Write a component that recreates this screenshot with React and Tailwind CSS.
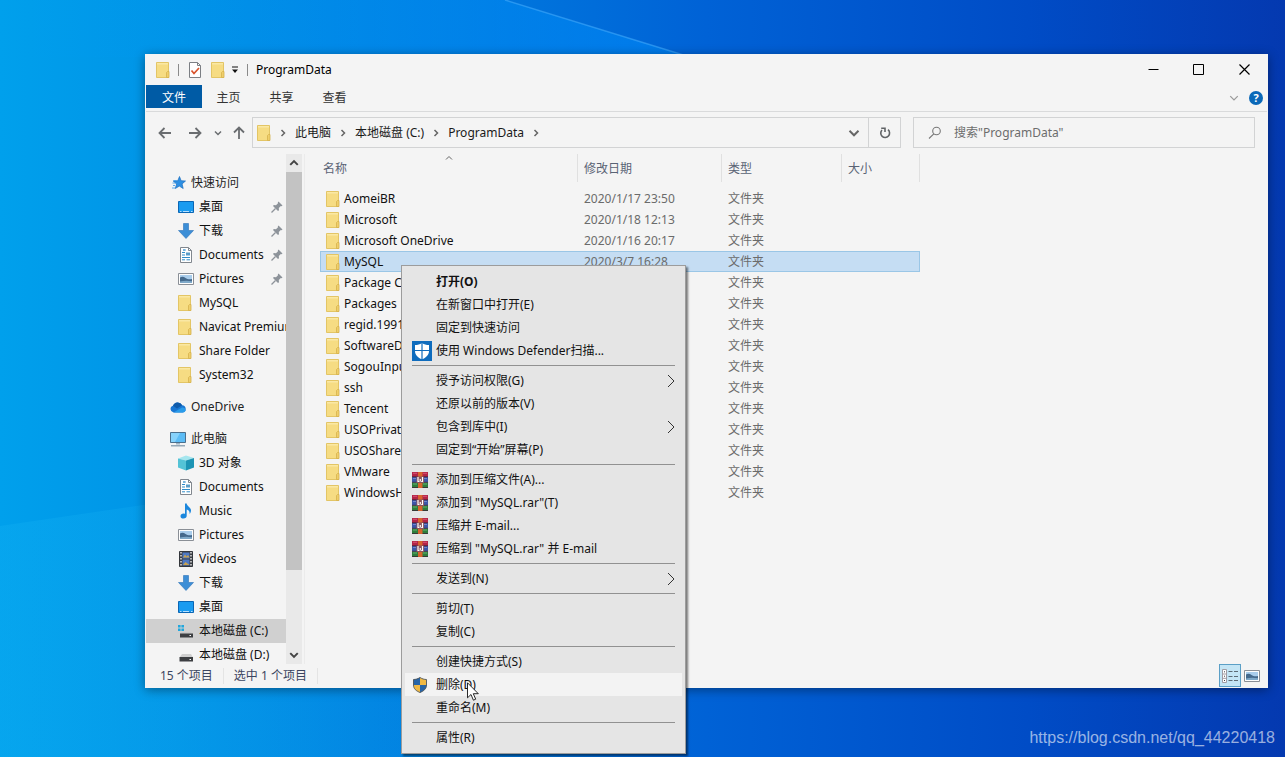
import React from 'react';

const quickAccess = [
  { name: '桌面', icon: 'desktop', pinned: true },
  { name: '下载', icon: 'download', pinned: true },
  { name: 'Documents', icon: 'document', pinned: true },
  { name: 'Pictures', icon: 'picture', pinned: true },
  { name: 'MySQL', icon: 'folder' },
  { name: 'Navicat Premium', icon: 'folder' },
  { name: 'Share Folder', icon: 'folder' },
  { name: 'System32', icon: 'folder' },
];

const thisPc = [
  { name: '3D 对象', icon: 'cube' },
  { name: 'Documents', icon: 'document' },
  { name: 'Music', icon: 'music' },
  { name: 'Pictures', icon: 'picture' },
  { name: 'Videos', icon: 'video' },
  { name: '下载', icon: 'download' },
  { name: '桌面', icon: 'desktop' },
  { name: '本地磁盘 (C:)', icon: 'systemDrive', active: true },
  { name: '本地磁盘 (D:)', icon: 'drive' },
];

const files = [
  { name: 'AomeiBR', date: '2020/1/17 23:50' },
  { name: 'Microsoft', date: '2020/1/18 12:13' },
  { name: 'Microsoft OneDrive', date: '2020/1/16 20:17' },
  { name: 'MySQL', date: '2020/3/7 16:28', selected: true },
  { name: 'Package Cache' },
  { name: 'Packages' },
  { name: 'regid.1991' },
  { name: 'SoftwareDist' },
  { name: 'SogouInput' },
  { name: 'ssh' },
  { name: 'Tencent' },
  { name: 'USOPrivate' },
  { name: 'USOShared' },
  { name: 'VMware' },
  { name: 'WindowsHolo' },
];

const menuGroups = [
  [
    { label: '打开(O)', bold: true },
    { label: '在新窗口中打开(E)' },
    { label: '固定到快速访问' },
    { label: '使用 Windows Defender扫描...', icon: 'defender' },
  ],
  [
    { label: '授予访问权限(G)', submenu: true },
    { label: '还原以前的版本(V)' },
    { label: '包含到库中(I)', submenu: true },
    { label: '固定到“开始”屏幕(P)' },
  ],
  [
    { label: '添加到压缩文件(A)...', icon: 'winrar' },
    { label: '添加到 "MySQL.rar"(T)', icon: 'winrar' },
    { label: '压缩并 E-mail...', icon: 'winrar' },
    { label: '压缩到 "MySQL.rar" 并 E-mail', icon: 'winrar' },
  ],
  [{ label: '发送到(N)', submenu: true }],
  [{ label: '剪切(T)' }, { label: '复制(C)' }],
  [
    { label: '创建快捷方式(S)' },
    { label: '删除(D)', icon: 'shield', hovered: true },
    { label: '重命名(M)' },
  ],
  [{ label: '属性(R)' }],
];

const FolderIcon = () => (
  <svg className="h-4 w-4 shrink-0" viewBox="0 0 16 16">
    <path d="M.5.5h12v15H.5z" fill="#f6dc83" stroke="#e3c565" />
    <path d="M1 1h11v1.5H1z" fill="#fae8a4" />
    <path d="M10.500 15.500v-5l1-1H13v6z" fill="#efcf6b" stroke="#d6b14c" strokeWidth=".8" />
  </svg>
);

const PictureIcon = () => (
  <svg className="h-4 w-4 shrink-0" viewBox="0 0 16 16">
    <path d="M.5 2.500h15v11H.5z" fill="#fdfdfd" stroke="#8a8f96" />
    <path d="M2 4h12v8H2z" fill="#a9cdec" />
    <path d="M2 6.500c2-1.200 4-.6 5.500.4S11 8.500 14 8v4H2z" fill="#44698c" />
    <path d="M2 10.500c4-1 8-1 12-.2V12H2z" fill="#7fa9c9" />
  </svg>
);

const icons = {
  folder: <FolderIcon />,
  picture: <PictureIcon />,
  star: (
    <svg className="h-4 w-4 shrink-0" viewBox="0 0 16 16">
      <path d="M9.500 1.500l1.600 4.200 4.400.3-3.400 2.900 1.100 4.600-3.900-2.400-4 2.400 1.300-4.500L3.200 6l4.600-.3z" fill="#2d8fe2" stroke="#1b6fc0" strokeWidth=".7" />
      <path d="M3.500 5.500h3M2.500 8h3M3 10.500h2M2 13h3" stroke="#4aa3ea" strokeWidth=".9" />
    </svg>
  ),
  desktop: (
    <svg className="h-4 w-4 shrink-0" viewBox="0 0 16 16">
      <path d="M.5 2.500h15v11H.5z" fill="#1a9bf0" stroke="#0b66b4" />
      <path d="M2 12.500h1.500M5 12.500h6M13 12.500h1.500" stroke="#b6e0ff" />
    </svg>
  ),
  download: (
    <svg className="h-4 w-4 shrink-0" viewBox="0 0 16 16">
      <path d="M5.500.5h5v7h5L8 15.500.5 7.500h5z" fill="#3c8ed6" stroke="#2b72b8" strokeWidth=".6" />
    </svg>
  ),
  document: (
    <svg className="h-4 w-4 shrink-0" viewBox="0 0 16 16">
      <path d="M2.500.5h8l3 3v12h-11z" fill="#fff" stroke="#81878e" />
      <path d="M10.500.5v3h3" fill="none" stroke="#81878e" />
      <path d="M4 5.500h3M4 8h3M4 10.500h8M4 12.800h3M8.500 12.800h3.500" stroke="#2f8cc9" />
      <path d="M8 5.500h4v3H8z" fill="#5a9dc8" />
      <path d="M6 2v2M5 3h3" stroke="#2f8cc9" strokeWidth=".8" />
    </svg>
  ),
  music: (
    <svg className="h-4 w-4 shrink-0" viewBox="0 0 16 16">
      <path d="M7 .5h1.700c.3 3 4.500 3.800 4.300 7.200-.1 1.500-.8 2.600-1.500 3.300.5-2.500-.6-3.800-2.800-4.500v6.300c0 1.700-1.300 2.700-3.200 2.700S2.500 14.600 2.500 13.200s1.300-2.600 3.100-2.600c.5 0 1 .1 1.400.3z" fill="#1b87dd" />
    </svg>
  ),
  video: (
    <svg className="h-4 w-4 shrink-0" viewBox="0 0 16 16">
      <path d="M1.500.5h13v15h-13z" fill="#3b3f45" stroke="#33363b" />
      <path d="M3 1v14M13 1v14" stroke="#e8e8e8" strokeWidth="1.400" strokeDasharray="1.500 1.500" />
      <path d="M4.500 1.500h7v6h-7z" fill="#4d78c4" />
      <path d="M4.500 8.500h7v6h-7z" fill="#4d78c4" />
      <path d="M5 6.500l2-3 1.500 2 1.500-1.500 1.500 2.500zM5 14l2.500-3 4 3z" fill="#c9a24e" />
    </svg>
  ),
  cloud: (
    <svg className="h-4 w-4 shrink-0" viewBox="0 0 16 16">
      <path d="M3.500 13.500A3.500 3.500 0 013 6.700 5 5 0 0112.200 6.200a3.700 3.700 0 01.6 7.300z" fill="#1976d2" />
      <path d="M3 6.700A5 5 0 0112.200 6.200L7 9.500z" fill="#0f5baa" />
      <path d="M3.500 13.500L12 8.500a3.600 3.600 0 013.800 3 3.300 3.300 0 01-3 2z" fill="#2a9cea" />
    </svg>
  ),
  computer: (
    <svg className="h-4 w-4 shrink-0" viewBox="0 0 16 16">
      <path d="M.5 1.500h15v10H.5z" fill="#5cbcf5" stroke="#4b6f8c" />
      <path d="M1 2h9L5 11H1z" fill="#86d2fb" />
      <path d="M6 12h4v1.500H6z" fill="#9fb4c4" />
      <path d="M1 14.800h14" stroke="#7d95a8" strokeWidth="1.200" />
    </svg>
  ),
  cube: (
    <svg className="h-4 w-4 shrink-0" viewBox="0 0 16 16">
      <path d="M0 3.500L8 .5l8 2.500-8 2.500z" fill="#a5e6ee" />
      <path d="M0 3.500l8 2v10l-8-3z" fill="#54c3d6" />
      <path d="M8 5.500l8-2.500v9.500l-8 3z" fill="#1d94b4" />
    </svg>
  ),
  systemDrive: (
    <svg className="h-4 w-4 shrink-0" viewBox="0 0 16 16">
      <path d="M0 2h2.600v2.600H0zM3.400 2H6v2.600H3.400zM0 5.400h2.600V8H0zM3.400 5.400H6V8H3.400z" fill="#22a7dd" />
      <path d="M3.500 9h9.500l1.500 2H2z" fill="#c9c9c9" />
      <path d="M2 10.500h13v4H2z" fill="#3d3f42" />
      <path d="M11.500 12.500H13" stroke="#fff" />
    </svg>
  ),
  drive: (
    <svg className="h-4 w-4 shrink-0" viewBox="0 0 16 16">
      <path d="M4 7h9l2 3.500H1.500z" fill="#cfcfcf" />
      <path d="M1.500 10h13.500v4.500H1.500z" fill="#3d3f42" />
      <path d="M11.500 12.500H13" stroke="#fff" />
    </svg>
  ),
  defender: (
    <svg className="h-5 w-5 shrink-0" viewBox="0 0 20 20">
      <path d="M0 0h20v20H0z" fill="#0f6cbd" />
      <path d="M10 2c2.200 1.400 4.300 2 7 2.100V10c0 4-3 6.700-7 8.300C6 16.700 3 14 3 10V4.100C5.700 4 7.800 3.400 10 2z" fill="#fff" />
      <path d="M10 2v17M3 9.500h14" stroke="#0f6cbd" strokeWidth="1.200" />
    </svg>
  ),
  winrar: (
    <svg className="h-4 w-4 shrink-0" viewBox="0 0 16 16">
      <path d="M0 0h16v5H0z" fill="#b32447" />
      <path d="M0 5h16v5.500H0z" fill="#3c56a8" />
      <path d="M0 10.500h16V16H0z" fill="#2f7d3c" />
      <path d="M0 4.800h16M0 10.300h16M0 15.600h16" stroke="#3a2233" strokeWidth=".8" />
      <path d="M1 1.300h4M11 1.300h4" stroke="#e0607c" strokeWidth=".8" />
      <path d="M1 6.500h3M12 6.500h3" stroke="#7d92da" strokeWidth=".8" />
      <path d="M1 12h4M11 12h4" stroke="#6dc27b" strokeWidth=".8" />
      <path d="M6 0h4.500v16H6z" fill="#d8642d" />
      <path d="M4.500 4.500h7.500v6.500H4.500z" fill="#8a5560" />
      <path d="M6 5v4.500h1.300M10.500 5v4.500H9.200M8.250 7v2.500" stroke="#fff" strokeWidth="1.200" fill="none" />
    </svg>
  ),
  shield: (
    <svg className="h-4 w-4 shrink-0" viewBox="0 0 16 16">
      <path d="M8 .5c2 1.300 4.200 2 6.500 2V8c0 3.800-2.700 6-6.500 7.500C4.200 14 1.500 11.800 1.500 8V2.500c2.300 0 4.500-.7 6.500-2z" fill="#f0b944" />
      <path d="M8 .5v7.500H1.500V2.500c2.300 0 4.500-.7 6.500-2zM8 8h6.500c0 3.800-2.700 6-6.500 7.500z" fill="#2765a8" />
      <path d="M8 .5c2 1.300 4.200 2 6.500 2V8c0 3.800-2.700 6-6.500 7.500C4.200 14 1.500 11.800 1.500 8V2.500c2.300 0 4.500-.7 6.500-2z" fill="none" stroke="#4b5560" strokeWidth=".9" />
    </svg>
  ),
};

const PinIcon = () => (
  <svg className="mr-[3px] h-3 w-3 shrink-0" viewBox="0 0 12 12">
    <path d="M7.500.5l4 4-1 .8-.7-.2-2 2 .2 2.200-1 .8L2 5l.8-1 2.200.2 2-2-.2-.8z" fill="#8d939a" />
    <path d="M4.500 7.500l-4 4" stroke="#8d939a" strokeWidth="1.300" />
  </svg>
);

const Chevron = ({ className, d, width = 1.5 }) => (
  <svg className={className} viewBox="0 0 8 8" fill="none" stroke="currentColor" strokeWidth={width}>
    <path d={d} />
  </svg>
);

const RIGHT = 'M2.500 1l3 3-3 3';
const DOWN = 'M1 2.500l3 3 3-3';
const UP = 'M1 5.500l3-3 3 3';

const TitleBar = () => (
  <header className="flex h-[30px] items-center pl-2.5">
    <FolderIcon />
    <span className="ml-1.5 h-3 w-px bg-[#8a8a8a]" />
    <button aria-label="属性" className="ml-2">
      <svg className="h-4 w-4" viewBox="0 0 16 16">
        <path d="M2.500.5h8l3 3v12h-11z" fill="#fff" stroke="#7c7f84" />
        <path d="M10.500.5v3h3" fill="none" stroke="#7c7f84" />
        <path d="M4.500 8.500l2.500 3 5-5.500" fill="none" stroke="#d9532c" strokeWidth="1.700" />
      </svg>
    </button>
    <button aria-label="新建文件夹" className="ml-2">
      <FolderIcon />
    </button>
    <button aria-label="自定义快速访问工具栏" className="ml-1">
      <svg className="h-2 w-2" viewBox="0 0 8 8">
        <path d="M1 1h6" stroke="#111" />
        <path d="M1 3.500h6l-3 3.500z" fill="#111" />
      </svg>
    </button>
    <span className="ml-2 h-3 w-px bg-[#8a8a8a]" />
    <h1 className="ml-2 text-xs text-black">ProgramData</h1>
    <div className="ml-auto flex h-full pb-0.5 text-black">
      <button aria-label="最小化" className="flex w-[45px] items-center justify-center">
        <svg className="h-[11px] w-[11px]" viewBox="0 0 11 11" fill="none" stroke="currentColor">
          <path d="M.5 5.500h10" />
        </svg>
      </button>
      <button aria-label="最大化" className="flex w-[45px] items-center justify-center">
        <svg className="h-[11px] w-[11px]" viewBox="0 0 11 11" fill="none" stroke="currentColor">
          <path d="M.5.5h10v10H.5z" />
        </svg>
      </button>
      <button aria-label="关闭" className="flex w-[46px] items-center justify-center">
        <svg className="h-[11px] w-[11px]" viewBox="0 0 11 11" fill="none" stroke="currentColor" strokeWidth="1.200">
          <path d="M.5.5l10 10M10.500.5l-10 10" />
        </svg>
      </button>
    </div>
  </header>
);

const Ribbon = () => (
  <div className="flex h-[27px] items-start border-b border-[#d9dadb] text-[#333]">
    <button className="h-[23px] w-14 bg-[#005ba5] pt-0.5 text-white">文件</button>
    {['主页', '共享', '查看'].map((tab) => (
      <button key={tab} className="h-6 w-[53px] pt-0.5">
        {tab}
      </button>
    ))}
    <div className="ml-auto flex h-[26px] items-center gap-2.5 pr-1 text-[#9a9a9a]">
      <button aria-label="展开功能区">
        <Chevron className="h-2.5 w-2.5" d={DOWN} width={1} />
      </button>
      <button aria-label="帮助" className="h-3.5 w-3.5 rounded-full bg-[#0a68b8] text-center text-[11px] leading-[14px] font-bold text-white">
        ?
      </button>
    </div>
  </div>
);

const AddressRow = () => (
  <div className="flex h-[42px] items-start pt-[5px] pr-3">
    <div className="flex h-[31px] w-[106px] shrink-0 items-center pl-3 text-[#6a6d70]">
      <button aria-label="后退">
        <svg className="h-3.5 w-3.5" viewBox="0 0 14 14" fill="none" stroke="currentColor" strokeWidth="1.800">
          <path d="M13 7H1.500M6.500 2l-5 5 5 5" />
        </svg>
      </button>
      <button aria-label="前进" className="ml-4">
        <svg className="h-3.5 w-3.5" viewBox="0 0 14 14" fill="none" stroke="currentColor" strokeWidth="1.800">
          <path d="M1 7h11.500M7.500 2l5 5-5 5" />
        </svg>
      </button>
      <button aria-label="最近浏览的位置" className="ml-3">
        <Chevron className="h-2 w-2" d={DOWN} />
      </button>
      <button aria-label="上移" className="ml-2.5">
        <svg className="h-3.5 w-3.5" viewBox="0 0 14 14" fill="none" stroke="currentColor" strokeWidth="1.800">
          <path d="M7 13V1.500M2 6.500l5-5 5 5" />
        </svg>
      </button>
    </div>
    <nav className="flex h-[31px] min-w-0 flex-1 items-center border border-[#d2d3d4] pl-1">
      <span className="w-3.5 shrink-0">
        <FolderIcon />
      </span>
      {['此电脑', '本地磁盘 (C:)', 'ProgramData'].map((crumb) => (
        <React.Fragment key={crumb}>
          <span className="flex w-6 shrink-0 justify-center text-[#666]">
            <Chevron className="h-2 w-2" d={RIGHT} />
          </span>
          <button className="whitespace-nowrap text-[#1a1a1a]">{crumb}</button>
        </React.Fragment>
      ))}
      <span className="flex w-6 justify-center text-[#666]">
        <Chevron className="h-2 w-2" d={RIGHT} />
      </span>
      <button aria-label="以前的位置" className="mr-2 ml-auto text-[#666]">
        <Chevron className="h-3 w-3" d={DOWN} width={1.3} />
      </button>
      <button aria-label="刷新" className="flex h-full w-8 items-center justify-center border-l border-[#d2d3d4] text-[#606366]">
        <svg className="h-3 w-3" viewBox="0 0 12 12" fill="none" stroke="currentColor" strokeWidth="1.600">
          <path d="M9 2.700A4.400 4.400 0 113 3" />
          <path d="M2.200 1.200H6v3.800" />
        </svg>
      </button>
    </nav>
    <label className="ml-3 flex h-[31px] w-[342px] items-center border border-[#d2d3d4] pl-3.5 text-[#777]">
      <svg className="h-3.5 w-3.5 shrink-0" viewBox="0 0 14 14" fill="none" stroke="currentColor" strokeWidth="1.100">
        <circle cx="8.500" cy="5" r="3.800" />
        <path d="M5.800 7.800L1 12.500" />
      </svg>
      <input
        type="text"
        aria-label="搜索"
        placeholder={'搜索"ProgramData"'}
        className="ml-3 min-w-0 flex-1 bg-transparent outline-none placeholder:text-[#6d6d6d]"
      />
    </label>
  </div>
);

const SideItem = ({ name, icon, pinned, active }) => (
  <li>
    <a
      href="#"
      className={`flex h-6 items-center gap-[5px] pl-8 text-[#111] ${active ? 'bg-[#d0d0d0]' : ''}`}
    >
      {icons[icon]}
      <span className="flex-1 overflow-hidden whitespace-nowrap">{name}</span>
      {pinned && <PinIcon />}
    </a>
  </li>
);

const SideRoot = ({ name, icon }) => (
  <a href="#" className="flex h-6 shrink-0 items-center gap-[5px] pl-6 text-[#222]">
    {icons[icon]}
    {name}
  </a>
);

const Sidebar = () => (
  <aside className="flex shrink-0">
    <nav className="flex w-[140px] flex-col gap-2 overflow-hidden pt-[17px]">
      <div className="shrink-0">
        <SideRoot name="快速访问" icon="star" />
        <ul>
          {quickAccess.map((item) => (
            <SideItem key={item.name} {...item} />
          ))}
        </ul>
      </div>
      <SideRoot name="OneDrive" icon="cloud" />
      <div className="shrink-0">
        <SideRoot name="此电脑" icon="computer" />
        <ul>
          {thisPc.map((item) => (
            <SideItem key={item.name} {...item} />
          ))}
        </ul>
      </div>
    </nav>
    <div className="flex w-4 flex-col bg-[#e9e9e9] text-[#444]">
      <button aria-label="向上滚动" className="flex h-[18px] items-center justify-center">
        <Chevron className="h-2.5 w-2.5" d={UP} width={1.6} />
      </button>
      <div className="flex min-h-0 flex-1 flex-col">
        <div className="h-[84%] bg-[#c3c3c3]" />
      </div>
      <button aria-label="向下滚动" className="flex h-[18px] items-center justify-center">
        <Chevron className="h-2.5 w-2.5" d={DOWN} width={1.6} />
      </button>
    </div>
  </aside>
);

const FileTable = () => (
  <main className="ml-0.5 min-w-0 flex-1 overflow-hidden border-l border-[#ebebeb] pl-[15px]">
    <table className="w-[600px] table-fixed border-separate border-spacing-0 text-left">
      <colgroup>
        <col className="w-[258px]" />
        <col className="w-36" />
        <col className="w-[120px]" />
        <col className="w-[78px]" />
      </colgroup>
      <thead className="text-[#5a6375]">
        <tr className="h-[34px]">
          <th className="relative p-0 align-top font-normal">
            <span className="absolute top-0 left-1/2 -translate-x-1/2 text-[#666]">
              <Chevron className="h-2 w-2" d={UP} width={1} />
            </span>
            <div className="flex h-7 items-center border-r border-[#e0e0e0] pt-0.5 pl-[3px]">名称</div>
          </th>
          {['修改日期', '类型', '大小'].map((label) => (
            <th key={label} className="p-0 align-top font-normal">
              <div className="flex h-7 items-center border-r border-[#e0e0e0] pt-0.5 pl-1.5">{label}</div>
            </th>
          ))}
        </tr>
      </thead>
      <tbody className="text-[#6b6b6b]">
        {files.map((file) => (
          <tr
            key={file.name}
            className={`h-[21px] leading-[21px] ${file.selected ? 'bg-[#c5ddf3] outline outline-1 -outline-offset-1 outline-[#9ac6e6]' : ''}`}
          >
            <td className="p-0">
              <div className="flex items-center gap-0.5 pl-1.5 text-[#111]">
                <FolderIcon />
                <span className="whitespace-nowrap">{file.name}</span>
              </div>
            </td>
            <td className="py-0 pr-0 pl-1.5">{file.date}</td>
            <td className="py-0 pr-0 pl-1.5">文件夹</td>
            <td className="p-0" />
          </tr>
        ))}
      </tbody>
    </table>
  </main>
);

const StatusBar = () => (
  <footer className="flex h-[23px] items-center pl-3.5 text-[#3b4560]">
    <span className="pr-2.5">15 个项目</span>
    <span className="border-x border-[#e4e4e4] px-2.5">选中 1 个项目</span>
    <div className="ml-auto flex h-full items-center gap-[3px] pr-[7px]">
      <button aria-label="详细信息" className="flex h-full w-[22px] items-center justify-center border border-[#5b9fc6] bg-[#c4e5f5]">
        <svg className="h-4 w-4" viewBox="0 0 16 16" fill="none">
          <path d="M.5 1.500h4v13h-4zM.5 6h4M.5 10.300h4" stroke="#a09ca4" fill="#fff" />
          <path d="M2 3.800h1M2 8.200h1M2 12.500h1" stroke="#444" />
          <path d="M6.500 3.500h4M12 3.500h4M6.500 8.500h4M12 8.500h4M6.500 12.500h4M12 12.500h4" stroke="#5d6b75" />
        </svg>
      </button>
      <button aria-label="大图标">
        <PictureIcon />
      </button>
    </div>
  </footer>
);

const ContextMenu = () => (
  <div
    role="menu"
    className="absolute top-[265px] left-[401px] w-[285px] border border-[#9c9c9c] bg-[#e5e5e5] px-[3px] py-1 text-[#111] shadow-[2px_2px_2px_rgba(0,0,0,0.5)]"
  >
    {menuGroups.map((group, i) => (
      <React.Fragment key={group[0].label}>
        {i > 0 && <hr className="mx-[7px] my-[3px] border-[#919191]" />}
        {group.map((item) => (
          <button
            key={item.label}
            role="menuitem"
            className={`flex h-[23px] w-full items-center gap-1 px-[7px] whitespace-nowrap ${item.hovered ? 'bg-[#f3f3f3]' : ''} ${item.bold ? 'font-bold' : ''}`}
          >
            <span className="w-5 shrink-0">{icons[item.icon]}</span>
            {item.label}
            {item.submenu && (
              <svg className="ml-auto h-3.5 w-2" viewBox="0 0 8 14" fill="none" stroke="#333">
                <path d="M1 1l6 6-6 6" />
              </svg>
            )}
          </button>
        ))}
      </React.Fragment>
    ))}
  </div>
);

const Wallpaper = () => (
  <svg className="absolute inset-0 h-full w-full" viewBox="0 0 1285 757" preserveAspectRatio="none">
    <defs>
      <linearGradient id="glow" x1="0" y1="0" x2="1" y2="0">
        <stop offset="0" stopColor="#009cf8" stopOpacity="0" />
        <stop offset="1" stopColor="#0090ff" stopOpacity=".5" />
      </linearGradient>
      <linearGradient id="floor" x1="0" y1="0" x2="1" y2="0">
        <stop offset="0" stopColor="#19b6f5" stopOpacity=".25" />
        <stop offset="1" stopColor="#19b6f5" stopOpacity="0" />
      </linearGradient>
    </defs>
    <path d="M0 0h505l185 57H0z" fill="url(#glow)" />
    <path d="M505 0l185 57" stroke="#4db4ff" strokeOpacity=".5" strokeWidth="1.500" />
    <path d="M0 526l600-88v319H0z" fill="url(#floor)" />
  </svg>
);

const App = () => {
  return (
    <div className="relative flex h-screen overflow-hidden bg-[linear-gradient(90deg,#00a0ec_0%,#0093e6_14%,#007bdf_35%,#0062d6_55%,#004cc6_80%,#0439b0_100%)] pt-[54px] pr-[17px] pb-[69px] pl-[145px] font-['Noto_Sans','Noto_Sans_CJK_SC',sans-serif] text-xs">
      <Wallpaper />
      <div className="relative flex min-w-0 flex-1 flex-col bg-[#f4f4f4] p-px shadow-[0_2px_10px_rgba(0,0,0,0.4)]">
        <TitleBar />
        <Ribbon />
        <AddressRow />
        <div className="flex min-h-0 flex-1">
          <Sidebar />
          <FileTable />
        </div>
        <StatusBar />
      </div>
      <ContextMenu />
      <svg className="absolute top-[682px] left-[467px] h-[19px] w-3" viewBox="0 0 12 19">
        <path d="M.5.8v15l3.500-3.300 2.400 5.700 2.300-1-2.400-5.500h5z" fill="#fff" stroke="#111" strokeWidth=".9" />
      </svg>
      <p className="absolute right-2.5 bottom-2 font-['Liberation_Sans',sans-serif] text-base leading-[22px] text-white/60">
        https://blog.csdn.net/qq_44220418
      </p>
    </div>
  );
};

export default App;
